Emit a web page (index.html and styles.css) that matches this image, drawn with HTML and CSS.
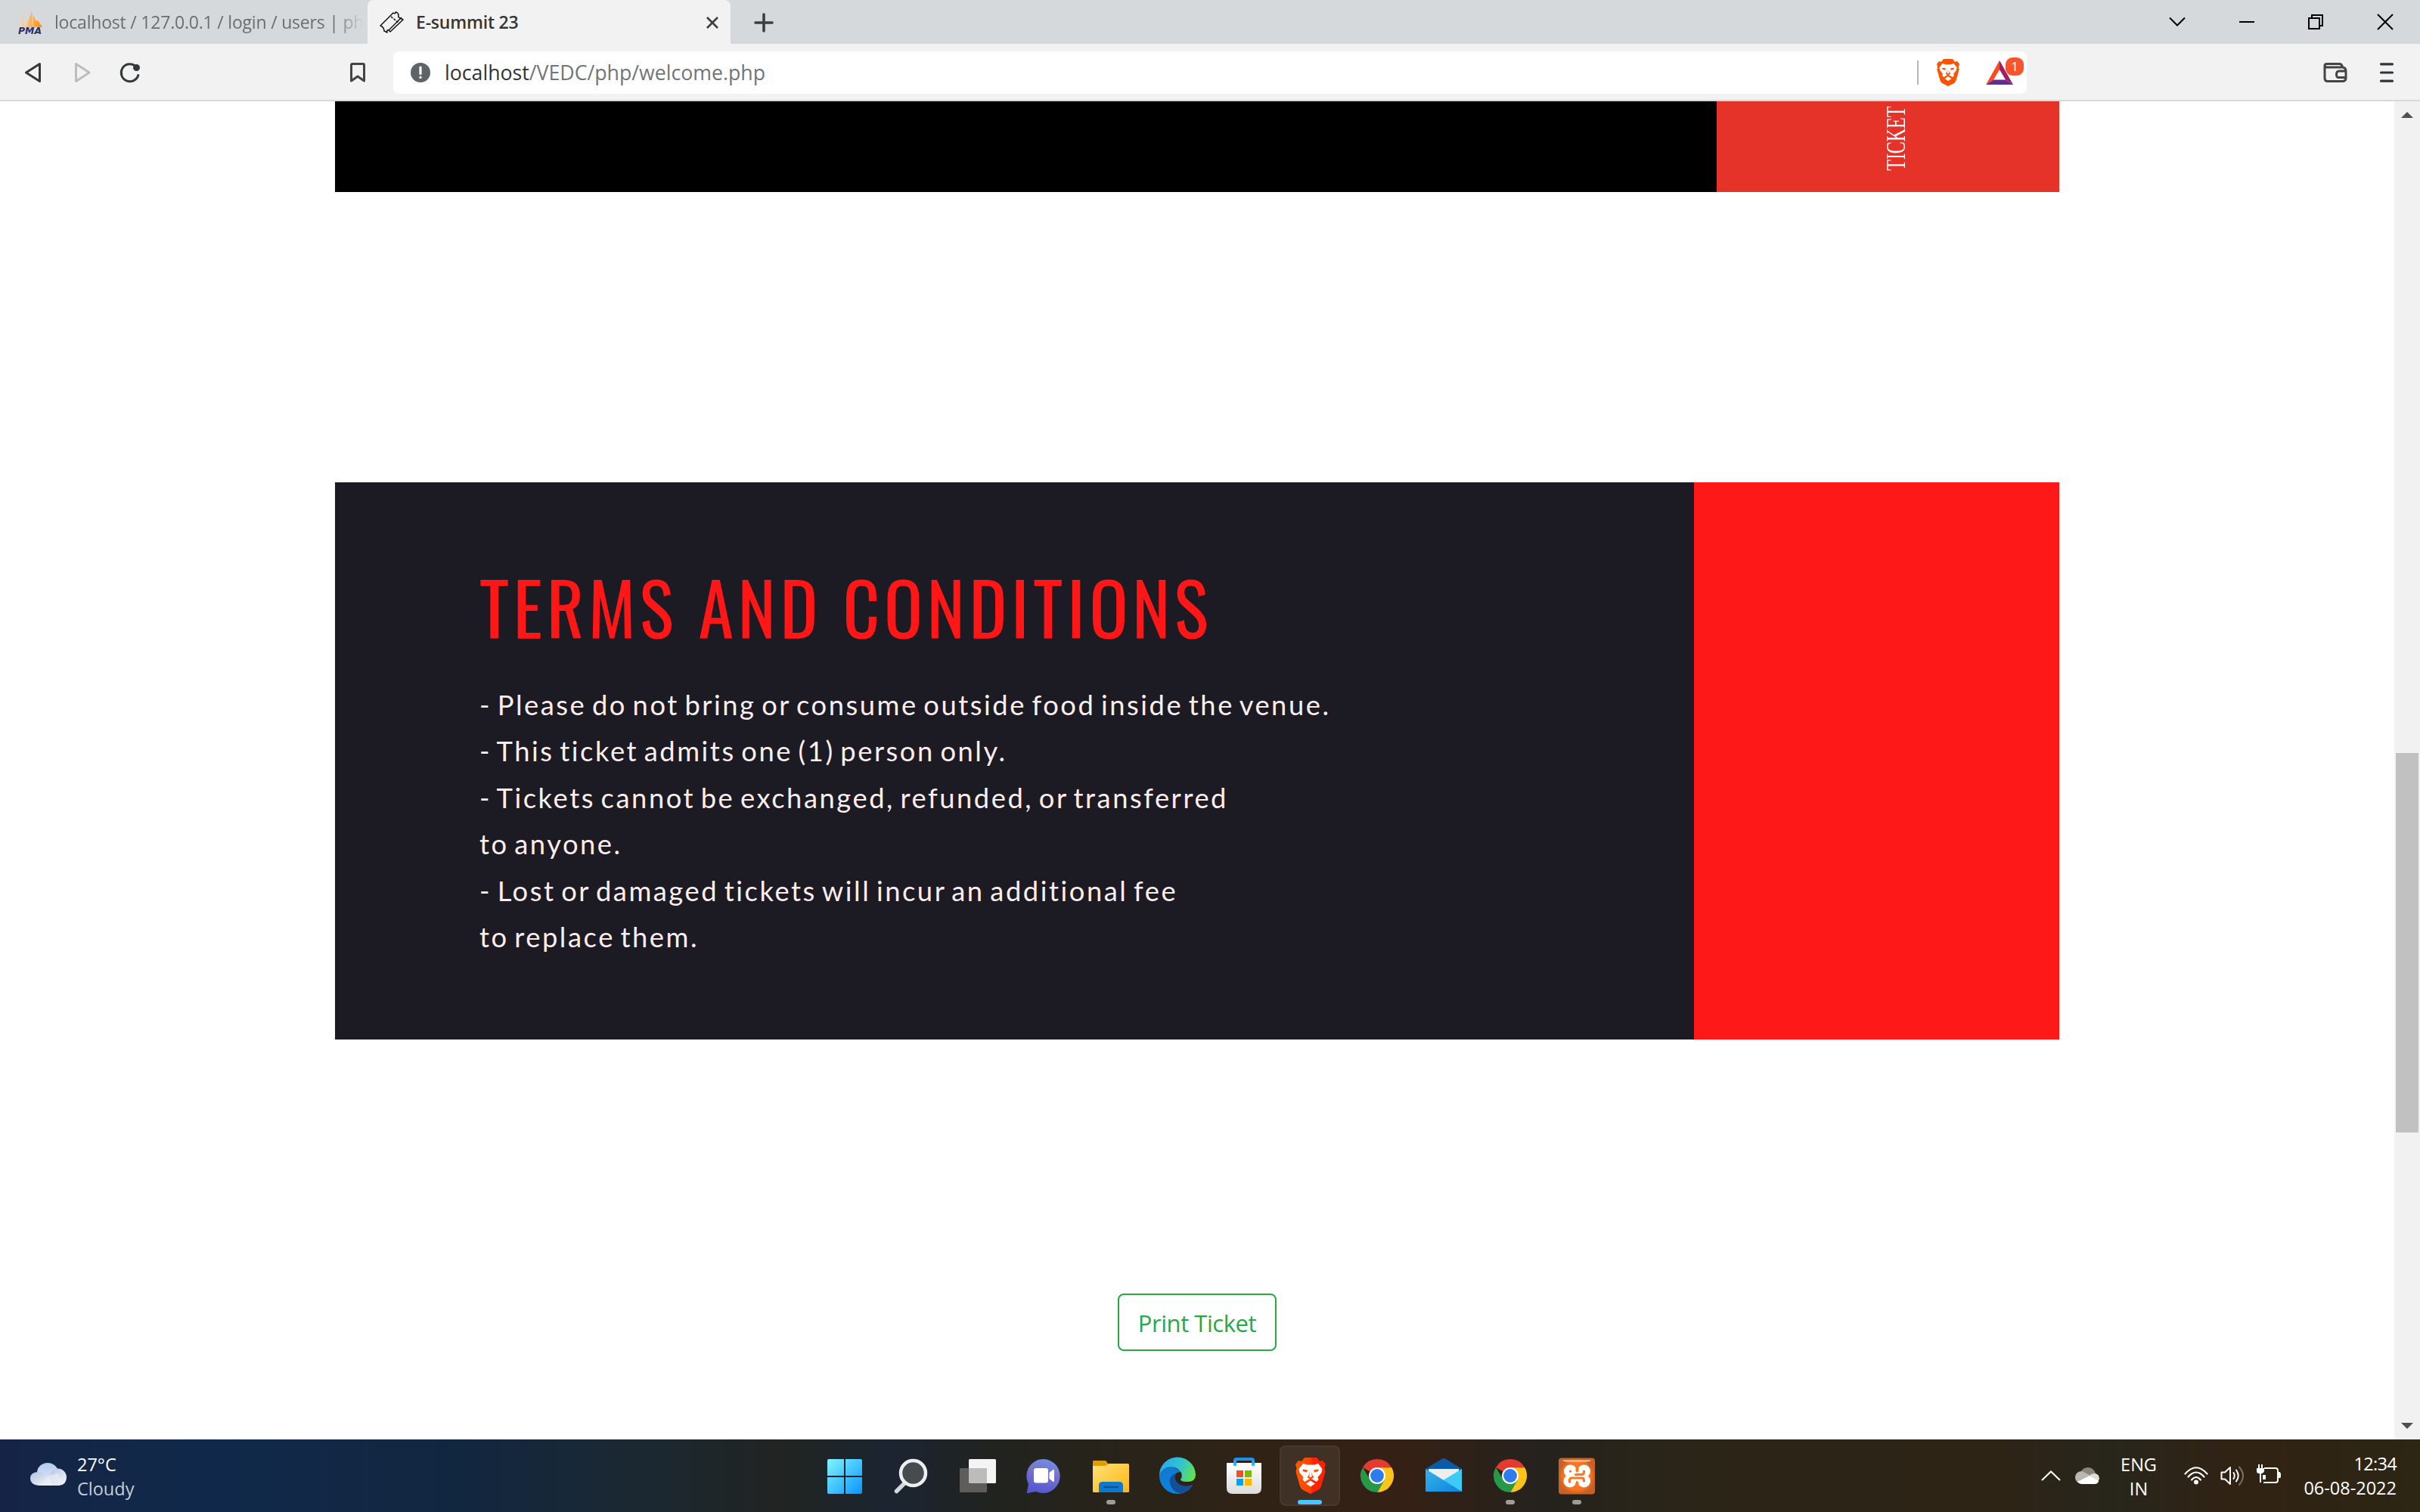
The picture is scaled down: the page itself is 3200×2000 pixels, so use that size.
FILE: index.html
```
<!DOCTYPE html>
<html lang="en">
<head>
<meta charset="utf-8">
<title>E-summit 23</title>
<link rel="stylesheet" href="styles.css">
</head>
<body>
<svg class="defs" aria-hidden="true">
  <defs>
    <linearGradient id="win" x1="0" y1="0" x2="1" y2="1"><stop offset="0" stop-color="#80f5ff"/><stop offset="1" stop-color="#0a94ff"/></linearGradient>
    <linearGradient id="chat" x1="0.7" y1="0" x2="0.4" y2="1"><stop offset="0" stop-color="#6d8fe6"/><stop offset=".35" stop-color="#7a77cc"/><stop offset="1" stop-color="#5557cf"/></linearGradient>
    <linearGradient id="folder" x1="0" y1="0" x2="1" y2="1"><stop offset="0" stop-color="#ffe07a"/><stop offset="1" stop-color="#fdb813"/></linearGradient>
    <linearGradient id="edgeTop" x1="0" y1=".3" x2="1" y2=".6"><stop offset="0" stop-color="#2aa8ee"/><stop offset=".55" stop-color="#2fc6cf"/><stop offset="1" stop-color="#66e04e"/></linearGradient>
    <linearGradient id="edgeLeft" x1="0" y1="0" x2="0" y2="1"><stop offset="0" stop-color="#1278cc"/><stop offset="1" stop-color="#0a84dd"/></linearGradient>
    <linearGradient id="bag" x1="0" y1="0" x2="0" y2="1"><stop offset="0" stop-color="#ffffff"/><stop offset="1" stop-color="#dcdcdc"/></linearGradient>
    <linearGradient id="handle" x1="0" y1="0" x2="0" y2="1"><stop offset="0" stop-color="#1a8ff0"/><stop offset="1" stop-color="#2cc4f6"/></linearGradient>
    <linearGradient id="brave" x1="0" y1="0" x2="1" y2="0"><stop offset="0" stop-color="#ff5a00"/><stop offset=".5" stop-color="#ff4000"/><stop offset=".55" stop-color="#ff2400"/><stop offset="1" stop-color="#ff2000"/></linearGradient>
    <linearGradient id="mail" x1="0" y1="0" x2="1" y2="1"><stop offset="0" stop-color="#35b3ee"/><stop offset="1" stop-color="#0f84dc"/></linearGradient>
    <linearGradient id="cloudBack" x1="0" y1="0" x2="0" y2="1"><stop offset="0" stop-color="#b4cdf2"/><stop offset="1" stop-color="#d9e3f8"/></linearGradient>
    <linearGradient id="cloudFront" x1="0" y1="0" x2="1" y2="1"><stop offset="0" stop-color="#b3c4dd"/><stop offset="1" stop-color="#f6f8fc"/></linearGradient>
    <linearGradient id="sail" x1="0" y1="0" x2="1" y2="0"><stop offset="0" stop-color="#fbd9ab"/><stop offset="1" stop-color="#ff8a0c"/></linearGradient>
    <radialGradient id="xampp"><stop offset="0" stop-color="#ff7e2a"/><stop offset=".75" stop-color="#f9741d"/><stop offset="1" stop-color="#c96126"/></radialGradient>
    <symbol id="lion" viewBox="0 0 40 48">
      <path d="M12 0H28L32 5L36 4L40 9L38.500 14L39.500 19L34 38Q33 41 30 43L20 48L10 43Q7 41 6 38L.5 19L1.500 14L0 9L4 4L8 5Z"/>
      <path fill="#fff" d="M10 8L16 9.500H24L30 8L35.500 15L34.500 20L29.500 26L30.500 29L28 32L20 27.500L12 32L9.500 29L10.500 26L5.500 20L4.500 15ZM20 30.500L26 34.500L20 38.500L14 34.500Z"/>
      <path class="lion-line" d="M10 15.500L16 16.500L15 19.500L9.500 18ZM30 15.500L24 16.500L25 19.500L30.500 18ZM17.500 17L18.500 22L15.500 26L20 29L24.500 26L21.500 22L22.500 17L21 22L22 25L20 26L18 25L19 22Z"/>
    </symbol>
    <symbol id="chrome" viewBox="0 0 48 48">
      <path fill="#e33b2e" d="M24 23L5 12A22 22 0 0 1 43.200 12.200Z"/>
      <path fill="#fcc419" d="M24 12.200H43.200A22 22 0 0 1 24 45L33 28Z"/>
      <path fill="#279847" d="M5 12A22 22 0 0 0 24.500 45L33.500 29L14.500 28Z"/>
      <circle cx="24" cy="23" r="11" fill="#fff"/>
      <circle cx="24" cy="23" r="8.900" fill="#2f7bee"/>
    </symbol>
  </defs>
</svg>

<header class="tabs">
  <div class="tab">
    <svg class="favicon" viewBox="0 0 32 32">
      <path fill="url(#sail)" d="M2 22Q5 14 7 5Q8 14 8 22ZM9 22Q15 12 18 0L19 22ZM19.500 4Q21 10 24 14L26 13Q29 17 32 22H20Z"/>
      <text class="pma" x="0" y="30.500" textLength="31" lengthAdjust="spacingAndGlyphs">PMA</text>
    </svg>
    <span class="tab-title faded">localhost / 127.0.0.1 / login / users | ph</span>
  </div>
  <div class="tab active">
    <svg class="favicon" viewBox="0 0 32 32">
      <g fill="none" stroke="#111" stroke-width="1.500" stroke-linejoin="round"><path d="M1 20L18 3Q21 5 21 2Q24 2 25 6Q24 9 27 10L31 12L14 28L12 26Q9 25 10 29L6 27Q6 22 1 20Z"/><path d="M12 26L29 9"/><path d="M15 8L25 16" stroke-dasharray="3 1.500"/></g>
    </svg>
    <span class="tab-title strong">E-summit 23</span>
    <svg class="tab-close" viewBox="0 0 16 16"><path d="M1 1L15 15M15 1L1 15" stroke="#3b3e42" stroke-width="2.600"/></svg>
  </div>
  <svg class="new-tab" viewBox="0 0 24 24"><path d="M12 1V23M1 12H23" stroke="#3b3e42" stroke-width="3.600" stroke-linecap="round"/></svg>
  <div class="window-buttons">
    <svg viewBox="0 0 20 20"><path d="M0 4.500L10 14.500L20 4.500"/></svg>
    <svg viewBox="0 0 20 20"><path d="M0 10H20"/></svg>
    <svg viewBox="0 0 20 20"><path d="M1 5H15V19H1ZM5 5V1H19V15H15"/></svg>
    <svg viewBox="0 0 20 20"><path d="M0 0L20 20M20 0L0 20"/></svg>
  </div>
</header>

<nav class="toolbar">
  <svg class="nav-icon back" viewBox="0 0 28 28"><path d="M21.500 2.500V25.500L3.500 14Z"/></svg>
  <svg class="nav-icon forward" viewBox="0 0 28 28"><path d="M5.500 2.500V25.500L23 14Z"/></svg>
  <svg class="nav-icon reload" viewBox="0 0 28 28"><path d="M20 4.500A11.500 11.500 0 1 0 24.800 17.500"/><circle class="solid" cx="22.500" cy="7.500" r="4.500"/></svg>
  <svg class="nav-icon bookmark" viewBox="0 0 28 28"><path d="M5.500 4Q5.500 2.500 7 2.500H21Q22.500 2.500 22.500 4V25L14 19L5.500 25Z"/></svg>
  <div class="address">
    <svg class="info" viewBox="0 0 26 26"><circle cx="13" cy="13" r="13" fill="#5f6368"/><path d="M13 6V14.500M13 19V19.500" stroke="#fff" stroke-width="3.200" stroke-linecap="round"/></svg>
    <span class="url"><b>localhost</b>/VEDC/php/welcome.php</span>
    <i class="divider"></i>
    <svg class="shield"><use href="#lion"/></svg>
    <div class="rewards">
      <svg viewBox="0 0 36 32"><path fill="#ff4724" d="M18 0L0 32L10 25.500L18 12Z"/><path fill="#9e1f63" d="M18 0L36 32L26 25.500L18 12Z"/><path fill="#662d91" d="M0 32L10 25.500H26L36 32Z"/></svg>
      <span class="badge">1</span>
    </div>
  </div>
  <svg class="wallet" viewBox="0 0 32 26"><path d="M2 3V20Q2 24.500 6 24.500H25Q30 24.500 30 20V11Q30 6 25 6H5Q2 6 2 3.500Q2 1.500 5 1.500H21Q25 1.500 25.500 6M30 11H21Q17.500 11 17.500 15.500T21 19.500H30"/></svg>
  <svg class="menu" viewBox="0 0 18 26"><path d="M1.500 1.800H16.500M1.500 13H16.500M1.500 24.200H16.500"/></svg>
</nav>

<main class="viewport">
  <section class="page">
    <div class="ticket front">
      <div class="body"></div>
      <div class="stub"><span>TICKET</span></div>
    </div>
    <div class="ticket terms">
      <div class="body">
        <h1>TERMS AND CONDITIONS</h1>
        <p>- Please do not bring or consume outside food inside the venue.<br>- This ticket admits one (1) person only.<br>- Tickets cannot be exchanged, refunded, or transferred<br>to anyone.<br>- Lost or damaged tickets will incur an additional fee<br>to replace them.</p>
      </div>
      <div class="stub"></div>
    </div>
    <button class="print">Print Ticket</button>
  </section>
  <aside class="scrollbar">
    <svg viewBox="0 0 16 8"><path d="M8 0L16 8H0Z"/></svg>
    <i class="thumb"></i>
    <svg viewBox="0 0 16 8"><path d="M0 0H16L8 8Z"/></svg>
  </aside>
</main>

<footer class="taskbar">
  <div class="weather">
    <svg viewBox="0 0 48 30"><ellipse cx="23" cy="13" rx="14" ry="13" fill="url(#cloudBack)"/><path fill="url(#cloudFront)" d="M26 30V20A11 12 0 0 1 48 19Q48 29 38 30Z"/><path fill="url(#cloudFront)" d="M11 30Q0 29 0 20.500T11 12Q20 12 24 18L30 30Z"/><path fill="#e9eef6" d="M12 30L25 17L36 14L44 24L38 30Z" opacity=".65"/></svg>
    <div><div>27°C</div><div class="dim">Cloudy</div></div>
  </div>
  <div class="apps">
    <div class="app"><svg viewBox="0 0 48 48"><path fill="url(#win)" d="M1 3Q1 1 3 1H23V23H1ZM25 1H45Q47 1 47 3V23H25ZM1 25H23V47H3Q1 47 1 45ZM25 25H47V45Q47 47 45 47H25Z"/></svg></div>
    <div class="app"><svg viewBox="0 0 48 48"><path d="M14 34L4.500 43.500" stroke="#d5d7d9" stroke-width="5.500" stroke-linecap="round"/><circle cx="26.500" cy="19.500" r="16.500" fill="#464b4e" stroke="#eceeef" stroke-width="4.500"/></svg></div>
    <div class="app"><svg viewBox="0 0 48 48"><rect x="12" y="1" width="36" height="32" rx="1.500" fill="#f4f4f4"/><rect x="0" y="13" width="36" height="32" rx="1.500" fill="#5e5d5b"/><path fill="#bcbcbc" d="M12 13H34.500Q36 13 36 14.500V33H13.500Q12 33 12 31.500Z"/></svg></div>
    <div class="app"><svg viewBox="0 0 48 48"><path fill="url(#chat)" d="M23.500 1A22.500 22.500 0 1 1 13 44L2 46Q0 46 1 44L3 34A22.500 22.500 0 0 1 23.500 1Z"/><rect x="10" y="13" width="19" height="19.500" rx="3" fill="#fff"/><path fill="#fff" d="M30.500 19L35.500 15Q37 14.500 37 16V30Q37 31.500 35.500 31L30.500 27Z"/></svg></div>
    <div class="app running"><svg viewBox="0 0 48 48"><path fill="#dd9c08" d="M0 12V4Q0 3 1.500 3H17L21 8V12Z"/><path fill="url(#folder)" d="M0 10H17L21 7H46.500Q48 7 48 8.500V43.500Q48 45 46.500 45H1.500Q0 45 0 43.500Z"/><path fill="#0f78c8" d="M8 45V36Q8 31 13 31H35Q40 31 40 36V45Z"/><path d="M15 38H33" stroke="#0b4f90" stroke-width="2" stroke-linecap="round"/></svg></div>
    <div class="app"><svg viewBox="0 0 48 48"><path fill="url(#edgeLeft)" d="M0 21Q4 9 16 10L30 18Q20 17 20 26Q20 38 34 40L38 42Q32 47 24 47A24 24 0 0 1 0 21Z"/><path fill="#14509a" d="M21 20Q12 24 14 33Q17 45 28 46.500Q40 44 44 36Q44 35 43 35Q34 39 26 34Q19 29 21 20Z"/><path fill="url(#edgeTop)" d="M0 22A24 23.500 0 0 1 48 22Q48 31 37 31Q28 31 28 28Q31 24 29 19Q24 11 14 11Q4 12 0 22Z"/></svg></div>
    <div class="app"><svg viewBox="0 0 48 48"><path fill="url(#bag)" d="M1 6H47V39Q47 47 39 47H9Q1 47 1 39Z"/><path d="M12 10V3Q12 1 14 1H34Q36 1 36 3V10" fill="none" stroke="url(#handle)" stroke-width="4"/><path fill="#f25022" d="M14 16H23V25H14Z"/><path fill="#7fba00" d="M25 16H34V25H25Z"/><path fill="#00a4ef" d="M14 27H23V36H14Z"/><path fill="#ffb900" d="M25 27H34V36H25Z"/></svg></div>
    <div class="app current"><svg class="brave-app"><use href="#lion"/></svg></div>
    <div class="app"><svg><use href="#chrome"/></svg></div>
    <div class="app"><svg viewBox="0 0 48 48"><path fill="#0b5aa8" d="M0 14L21 1Q24 -1 27 1L48 14V20H0Z"/><path fill="#eeeeee" d="M4 14H44V22L25 34L4 22Z"/><path fill="#3ccbf4" d="M48 14V44L20 31Z"/><path fill="url(#mail)" d="M0 14L48 44H0Z"/></svg></div>
    <div class="app running"><svg><use href="#chrome"/></svg></div>
    <div class="app running"><svg viewBox="0 0 48 48"><rect y="-.5" width="48" height="48" rx="4" fill="url(#xampp)"/><path fill="#fff" opacity=".45" d="M5 2H43Q42 5 36 5H12Q6 5 5 2Z"/><g fill="#fff"><circle cx="15.500" cy="17" r="8.500"/><circle cx="33.500" cy="17" r="8.500"/><circle cx="15" cy="30" r="8.500"/><circle cx="33.500" cy="30" r="8.500"/><path d="M12 17H36V30H12Z"/></g><path fill="none" stroke="#fb7822" stroke-width="3.200" stroke-linecap="round" stroke-linejoin="round" d="M14.500 31V29Q14.500 26 17.500 26H31Q33.500 26 33.500 30M22.500 21.500H31Q33.500 21.500 33.500 17M15.500 17V17.200"/><path fill="#fb7822" d="M22.500 12H26.500V17L24.500 19L22.500 17ZM22.500 37H26.500V32L24.500 30L22.500 32Z"/></svg></div>
  </div>
  <div class="tray">
    <svg class="chevron" viewBox="0 0 26 14"><path d="M1 13L13 1.500L25 13" fill="none" stroke="#fff" stroke-width="2"/></svg>
    <svg class="onedrive" viewBox="0 0 32 22"><path fill="#8b877f" d="M7 6Q11 0 17 0Q24 0 27 8L14 13Z"/><path fill="#b9b7b2" d="M8 21Q0 20 0 13Q1 5 9 5L21 11L6 21Z"/><path fill="#deddda" d="M19 11Q22 7.500 26 8Q32 9 32 15L30 20Z"/><path fill="#fff" d="M3 19L19 11L31 18Q30 22 26 22H8Q5 22 3 19Z"/></svg>
    <div class="lang"><div>ENG</div><div>IN</div></div>
    <svg class="wifi" viewBox="0 0 32 26"><g fill="none" stroke="#fff" stroke-width="2.200" stroke-linecap="round"><path d="M1.500 10.500Q16 -6 30.500 10.500M5.500 14.500Q16 2.500 26.500 14.500M10 18.500Q16 11.500 22 18.500"/></g><circle cx="16" cy="21.500" r="3" fill="#fff"/></svg>
    <svg class="sound" viewBox="0 0 32 28"><g fill="none" stroke="#fff" stroke-width="2" stroke-linejoin="round" stroke-linecap="round"><path d="M1.500 9.500H6L13 3V25L6 18.500H1.500ZM17.500 10Q20 14 17.500 18M21 6.500Q26.500 14 21 21.500"/><path d="M25 2.500Q35 14 25 26" opacity=".35"/></g></svg>
    <svg class="battery" viewBox="0 0 32 26"><path fill="none" stroke="#fff" stroke-width="2" d="M10 5H25Q28 5 28 8V21Q28 24 25 24H9M5 11V24"/><path fill="#fff" d="M2 0H4V5H6V0H8V5H10V9Q9 12 7 12H3Q0 12 0 9V5H2ZM8 14H12V20H8ZM28 10H30Q32 10 32 14.500T30 18H28Z"/></svg>
    <div class="clock"><div class="time">12:34</div><div>06-08-2022</div></div>
  </div>
</footer>
</body>
</html>
```
FILE: styles.css
```
* { box-sizing: border-box; }

body {
  margin: 0;
  width: 3200px;
  height: 2000px;
  overflow: hidden;
  display: flex;
  flex-direction: column;
  background: #fff;
  font-family: "Open Sans", "Noto Sans", sans-serif;
}

svg { display: block; flex: none; overflow: visible; }
.defs { position: absolute; width: 0; height: 0; }

/* Tab strip */
.tabs { height: 58px; flex: none; display: flex; align-items: center; background: #d5d9dc; }
.tab { width: 486px; height: 58px; padding-left: 24px; display: flex; align-items: center; }
.tab.active { width: 480px; padding: 0 16px; border-radius: 8px 8px 0 0; background: #f2f2f2; }
.favicon { width: 32px; height: 32px; margin-top: 2px; }
.pma { font: italic 700 13px "DejaVu Sans", sans-serif; fill: #2f2c63; }
.tab-title { margin-left: 16px; font-size: 23px; line-height: 32px; letter-spacing: -0.2px; white-space: nowrap; color: #33373b; }
.faded {
  flex: none;
  color: #6a6e72;
  -webkit-mask-image: linear-gradient(to right, #000 370px, transparent 408px);
  mask-image: linear-gradient(to right, #000 370px, transparent 408px);
}
.strong { font-weight: 600; margin-left: 16px; }
.tab-close { width: 16px; height: 16px; margin: 2px 0 0 auto; }
.new-tab { width: 24px; height: 24px; margin: 2px 0 0 32px; }
.window-buttons { margin: 0 36px 0 auto; display: flex; gap: 71.600px; }
.window-buttons svg { width: 20px; height: 20px; fill: none; stroke: #000; stroke-width: 2; }

/* Toolbar */
.toolbar { height: 76px; flex: none; padding-top: 2px; display: flex; align-items: center; background: #f2f2f2; border-bottom: 2px solid #d5d9dc; }
.nav-icon { width: 28px; height: 28px; fill: none; stroke: #36393c; stroke-width: 3; stroke-linejoin: round; stroke-linecap: round; }
.nav-icon .solid { fill: #36393c; stroke: none; }
.back { margin-left: 31px; }
.forward { margin-left: 36px; stroke: #bdbdbd; }
.reload { margin-left: 35px; }
.bookmark { margin-left: 273px; stroke: #444; }
.address { width: 2160px; height: 56px; margin-left: 33px; padding-left: 23px; border-radius: 8px; background: #fff; display: flex; align-items: center; }
.info { width: 26px; height: 26px; }
.url { margin-left: 19px; font-size: 26.700px; line-height: 36px; color: #70757a; }
.url b { font-weight: 400; color: #2f3338; }
.divider { width: 2px; height: 32px; margin-left: auto; background: #b4b8bb; }
.shield { width: 32px; height: 36px; margin-left: 23px; fill: #fb5402; color: #fb5402; }
.lion-line { fill: #fb4a10; }
.rewards { position: relative; width: 36px; height: 32px; margin: 0 18px 0 34px; }
.rewards svg { width: 36px; height: 32px; }
.badge { position: absolute; left: 26px; top: -4px; width: 24px; height: 24px; border-radius: 9px; background: #fb542b; color: #fff; font-size: 17px; line-height: 23px; text-align: center; }
.wallet { width: 32px; height: 26px; margin-left: 392px; fill: none; stroke: #444; stroke-width: 3; }
.menu { width: 18px; height: 26px; margin-left: 43px; stroke: #303439; stroke-width: 3.200; stroke-linecap: round; }

/* Web page */
.viewport { flex: 1; min-height: 0; display: flex; }
.page { flex: 1; padding-left: 443px; }
.ticket { width: 2280px; display: flex; }
.ticket .body { flex: 1; }
.front { height: 120px; }
.front .body { background: #000; }
.front .stub { width: 453px; background: #e6332a; display: flex; justify-content: center; padding: 7px 0 0 21px; }
.front span {
  width: 36px;
  height: 85px;
  font: 36px/36px "Liberation Serif", serif;
  writing-mode: vertical-rl;
  color: #fff;
  transform: rotate(180deg) scaleY(0.665);
  transform-origin: 50% 50%;
  display: flex;
  justify-content: center;
}
.terms { height: 737px; margin-top: 384px; }
.terms .body { background: #1c1a23; padding: 93px 0 0 191px; }
.terms .stub { width: 483px; background: #ff1818; }
h1 { margin: 0; font: 400 94.500px/140px Oswald, "Roboto Condensed", sans-serif; letter-spacing: 5.800px; white-space: nowrap; color: #ff1616; }
.terms p { margin: 31px 0 0 0; font: 36.300px/61.400px Lato, sans-serif; letter-spacing: 2.550px; word-spacing: -4.200px; white-space: nowrap; color: #fbeeee; }
.print { display: block; width: 210px; height: 76px; margin: 336px 0 0 1035px; padding: 2px 0 0; border: 2px solid #28a745; border-radius: 8px; background: #fff; color: #28a745; font: 31px/40px "Open Sans", sans-serif; letter-spacing: -0.450px; }

.scrollbar { width: 34px; background: #f1f1f1; display: flex; flex-direction: column; align-items: center; padding: 14px 0; }
.scrollbar svg { width: 16px; height: 8px; fill: #505050; }
.thumb { width: 30px; height: 502px; margin: 840px 0 auto; background: #c1c1c1; }

/* Taskbar */
.taskbar {
  height: 96px;
  flex: none;
  display: grid;
  grid-template-columns: 1fr auto 1fr;
  align-items: center;
  background: linear-gradient(to right, #152446 0, #10294a 280px, #12263f 620px, #1a2833 820px, #212422 1030px, #1b2430 1180px, #22231f 1320px, #2e2316 1620px, #352014 1850px, #25221e 2040px, #2a2518 2200px, #2e2416 2640px, #28261c 2790px, #312314 2960px, #2c2614 3200px);
  color: #fff;
  font-size: 23.500px;
  line-height: 32px;
}
.weather { display: flex; align-items: center; gap: 14px; padding: 2px 0 0 40px; }
.weather svg { width: 48px; height: 30px; margin-top: -7px; }
.dim { color: #c9cdd3; }
.apps { display: flex; }
.app { position: relative; width: 80px; height: 80px; margin: 0 4px; border-radius: 8px; display: flex; justify-content: center; padding: 17px 0 0 1px; }
.app svg { width: 48px; height: 48px; }
.app.current { background: rgba(255, 255, 255, 0.070); box-shadow: inset 0 0 0 2px rgba(255, 255, 255, 0.040); }
.app .brave-app { width: 40px; height: 48px; margin-top: -1px; fill: url(#brave); }
.running::after, .current::after { content: ""; position: absolute; left: 35px; bottom: 2px; width: 12px; height: 6px; border-radius: 3px; background: #9f9b96; }
.current::after { left: 24px; width: 32px; background: #4cc2ff; }
.tray { display: flex; align-items: center; justify-content: flex-end; padding-right: 31px; }
.chevron { width: 26px; height: 14px; }
.onedrive { width: 32px; height: 22px; margin-left: 19px; }
.lang { width: 60px; margin-left: 22px; padding-top: 2px; text-align: center; }
.wifi { width: 32px; height: 26px; margin-left: 30px; }
.sound { width: 32px; height: 28px; margin-left: 16px; }
.battery { width: 32px; height: 26px; margin-left: 16px; margin-top: -4px; }
.clock { width: 153px; text-align: right; }
.time { letter-spacing: -0.700px; }
```
